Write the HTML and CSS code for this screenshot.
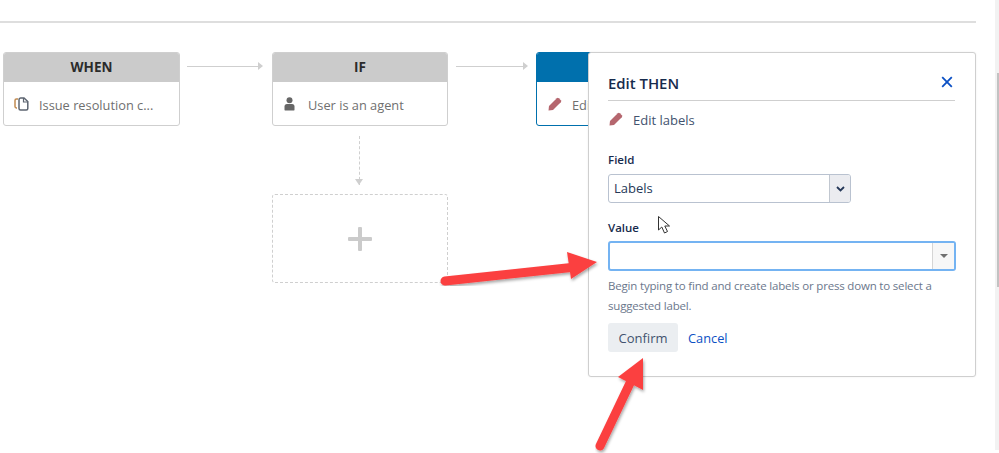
FILE: index.html
```html
<!DOCTYPE html>
<html lang="en">
<head>
<meta charset="utf-8">
<title>Edit THEN</title>
<link rel="stylesheet" href="styles.css">
</head>
<body>
<div class="scrolltrack"><div class="scrollthumb"></div></div>
<main class="page">
  <hr class="toprule">
  <section class="canvas">
    <article class="node node-when">
      <header class="node-head">WHEN</header>
      <div class="node-body">
        <svg class="node-icon" width="15" height="14" viewBox="0 0 15 14"><path d="M4 2H2.400Q1 2 1 3.400V9.600Q1 11 2.400 11H3" fill="none" stroke="#c08a50" stroke-width="1.500"/><path d="M5 2.800Q5 1 6.500 1H10L13.800 4.500V11.500Q13.800 13 12.300 13H6.500Q5 13 5 11.500Z" fill="none" stroke="#5c6470" stroke-width="1.500"/><path d="M9.500 1V5H13.800" fill="none" stroke="#5c6470" stroke-width="1.200"/></svg>
        <span>Issue resolution c...</span>
      </div>
    </article>
    <div class="link link-1"></div>
    <article class="node node-if">
      <header class="node-head">IF</header>
      <div class="node-body">
        <svg class="node-icon person" width="11" height="14" viewBox="0 0 11 14"><circle cx="5.500" cy="3.300" r="3" fill="#666"/><path d="M1 13.500Q.5 13.500.5 12.500V9.500Q.5 7 3 7H8Q10.500 7 10.500 9.500V12.500Q10.500 13.500 10 13.500Z" fill="#666"/></svg>
        <span>User is an agent</span>
      </div>
    </article>
    <div class="link link-2"></div>
    <div class="link-down"></div>
    <div class="add-tile"><span class="plus"></span></div>
    <article class="node node-then">
      <header class="node-head"></header>
      <div class="node-body">
        <svg class="node-icon" width="14" height="14" viewBox="0 0 14 14"><path d="M.5 13.500L1 9L8.800 1.200Q9.800.3 10.800 1.200L12.800 3.200Q13.700 4.200 12.800 5.200L5 13Z" fill="#b5666e"/></svg>
        <span>Edit labels</span>
      </div>
    </article>

    <aside class="popover">
      <div class="pop-head">
        <h2 class="pop-title">Edit THEN</h2>
        <svg class="pop-close" width="12" height="12" viewBox="0 0 12 12"><path d="M1.200 1.200L10.800 10.800M10.800 1.200L1.200 10.800" stroke="#0b50c4" stroke-width="1.800" fill="none"/></svg>
      </div>
      <div class="pop-sub">
        <svg width="14" height="14" viewBox="0 0 14 14"><path d="M.5 13.500L1 9L8.800 1.200Q9.800.3 10.800 1.200L12.800 3.200Q13.700 4.200 12.800 5.200L5 13Z" fill="#b5666e"/></svg>
        <span>Edit labels</span>
      </div>
      <label class="field-label field-label-1">Field</label>
      <div class="select">
        <span class="select-value">Labels</span>
        <span class="select-btn"><svg width="9" height="6" viewBox="0 0 9 6"><path d="M1 1L4.500 4.500L8 1" fill="none" stroke="#253858" stroke-width="1.800"/></svg></span>
      </div>
      <label class="field-label field-label-2">Value</label>
      <div class="combo">
        <span class="combo-input"></span>
        <span class="combo-btn"><i class="caret"></i></span>
      </div>
      <p class="help">Begin typing to find and create labels or press down to select a suggested label.</p>
      <div class="actions">
        <button class="btn" type="button">Confirm</button>
        <a class="cancel" href="#">Cancel</a>
      </div>
    </aside>
  </section>
</main>

<svg class="overlay" width="999" height="453" viewBox="0 0 999 453">
  <defs>
    <filter id="soft" x="-10%" y="-10%" width="125%" height="125%">
      <feDropShadow dx="1" dy="2" stdDeviation="1.500" flood-color="#000" flood-opacity=".35"/>
    </filter>
  </defs>
  <g filter="url(#soft)">
    <path d="M445 281L576 267" stroke="#fb4141" stroke-width="9" stroke-linecap="round" fill="none"/>
    <path d="M567 252L597 262L571 279Z" fill="#fb4141"/>
  </g>
  <g filter="url(#soft)">
    <path d="M600 446L631 381" stroke="#fb4141" stroke-width="9" stroke-linecap="round" fill="none"/>
    <path d="M643 358L618 377L643 390Z" fill="#fb4141"/>
  </g>
  <path d="M658.500 216.500V230L661.800 227L664.500 233L667.500 231.500L664.800 226H669.500Z" fill="#fff" stroke="#333" stroke-width="1"/>
</svg>
</body>
</html>
```
FILE: styles.css
```css
* { box-sizing: border-box; }
html, body { margin: 0; height: 453px; overflow: hidden; background: #fff; }
body { font-family: "Open Sans", "Noto Sans", "Liberation Sans", sans-serif; font-size: 12px; color: #172b4d; position: relative; }

.page { width: 976px; padding-top: 21px; }
.toprule { height: 2px; margin: 0; border: 0; background: #dedede; }

.canvas { position: relative; height: 430px; }

.scrolltrack { position: absolute; left: 995px; top: 0; width: 4px; height: 450px; background: #f2f2f2; }
.scrollthumb { position: absolute; left: 2px; top: 73px; width: 2px; height: 214px; background: #c2c2c2; }

.node { position: absolute; top: 29px; width: 176px; height: 74px; background: #fff; border: 1px solid #cfcfcf; border-radius: 3px; overflow: hidden; }
.node-when { left: 3px; width: 177px; }
.node-if { left: 272px; }
.node-then { left: 536px; border-color: #0070ad; }
.node-head { height: 29px; background: #cbcbcb; font-size: 13.500px; font-weight: 700; line-height: 29px; text-align: center; color: #2b2b2b; }
.node-then .node-head { background: #0070ad; }
.node-body { display: flex; align-items: center; gap: 10px; height: 44px; padding: 2px 0 0 10px; font-size: 12.800px; color: #6f6f6f; white-space: nowrap; }
.node-then .node-body { padding-left: 11px; }
.node-icon { flex: none; margin-top: -2px; }
.person { margin-left: 1px; margin-right: 3px; }

.link { position: absolute; top: 43px; height: 1px; background: #cfcfcf; }
.link::after { content: ""; position: absolute; right: -1px; top: -4px; border-left: 5px solid #cfcfcf; border-top: 4.500px solid transparent; border-bottom: 4.500px solid transparent; }
.link-1 { left: 187px; width: 75px; }
.link-2 { left: 456px; width: 71px; }
.link-down { position: absolute; left: 359px; top: 113px; height: 49px; border-left: 1px dashed #cfcfcf; }
.link-down::after { content: ""; position: absolute; left: -5px; bottom: 0; border-top: 6px solid #cfcfcf; border-left: 4.500px solid transparent; border-right: 4.500px solid transparent; }

.add-tile { position: absolute; left: 272px; top: 171px; width: 176px; height: 89px; border: 1px dashed #cfcfcf; border-radius: 3px; display: flex; align-items: center; justify-content: center; }
.plus { position: relative; width: 24px; height: 24px; }
.plus::before, .plus::after { content: ""; position: absolute; background: #cbcbcb; border-radius: 1px; }
.plus::before { left: 0; top: 10px; width: 24px; height: 4px; }
.plus::after { left: 10px; top: 0; width: 4px; height: 24px; }

.popover { position: absolute; left: 588px; top: 29px; width: 388px; height: 325px; background: #fff; border: 1px solid #cfcfcf; border-radius: 3px; padding: 19px 20px 0 19px; box-shadow: 0 0 2px rgba(0,0,0,.08); }
.pop-head { display: flex; justify-content: space-between; align-items: flex-start; height: 29px; border-bottom: 1px solid #cfcfcf; }
.pop-title { margin: 0; font-size: 14.900px; font-weight: 600; line-height: 22px; color: #172b4d; }
.pop-close { margin: 4px 2px 0 0; }
.pop-sub { display: flex; align-items: center; gap: 10px; margin-top: 9px; height: 19px; font-size: 13px; color: #42526e; }
.pop-sub svg { margin-left: 1px; margin-top: -2px; }
.field-label { display: block; font-size: 11.500px; font-weight: 600; line-height: 16px; color: #172b4d; }
.field-label-1 { margin-top: 23px; }
.field-label-2 { margin-top: 17px; }
.select { display: flex; width: 243px; height: 29px; margin-top: 6px; border: 1px solid #b9c2d0; border-radius: 3px; overflow: hidden; }
.select-value { flex: 1; padding-left: 5px; font-size: 13px; line-height: 26px; color: #253858; }
.select-btn { display: flex; align-items: center; justify-content: center; width: 21px; background: #ebecf0; border-left: 1px solid #c1c7d0; }
.combo { display: flex; width: 348px; height: 30px; margin-top: 5px; border: 2px solid #74b3f2; border-radius: 3px; overflow: hidden; }
.combo-input { flex: 1; }
.combo-btn { display: flex; align-items: center; justify-content: center; width: 22px; background: #f7f7f7; border-left: 1px solid #d5d5d5; }
.caret { border-top: 4px solid #707070; border-left: 4px solid transparent; border-right: 4px solid transparent; }
.help { margin: 5px 0 0; font-size: 11.500px; letter-spacing: -.18px; line-height: 20px; color: #6b778c; }
.actions { display: flex; align-items: center; gap: 10px; margin-top: 7px; }
.btn { width: 70px; height: 29px; padding: 0; border: 0; border-radius: 3px; background: #ebeef1; font: inherit; font-size: 13px; color: #42526e; }
.cancel { font-size: 12.800px; color: #0b50c4; text-decoration: none; }

.overlay { position: absolute; left: 0; top: 0; pointer-events: none; }
```
